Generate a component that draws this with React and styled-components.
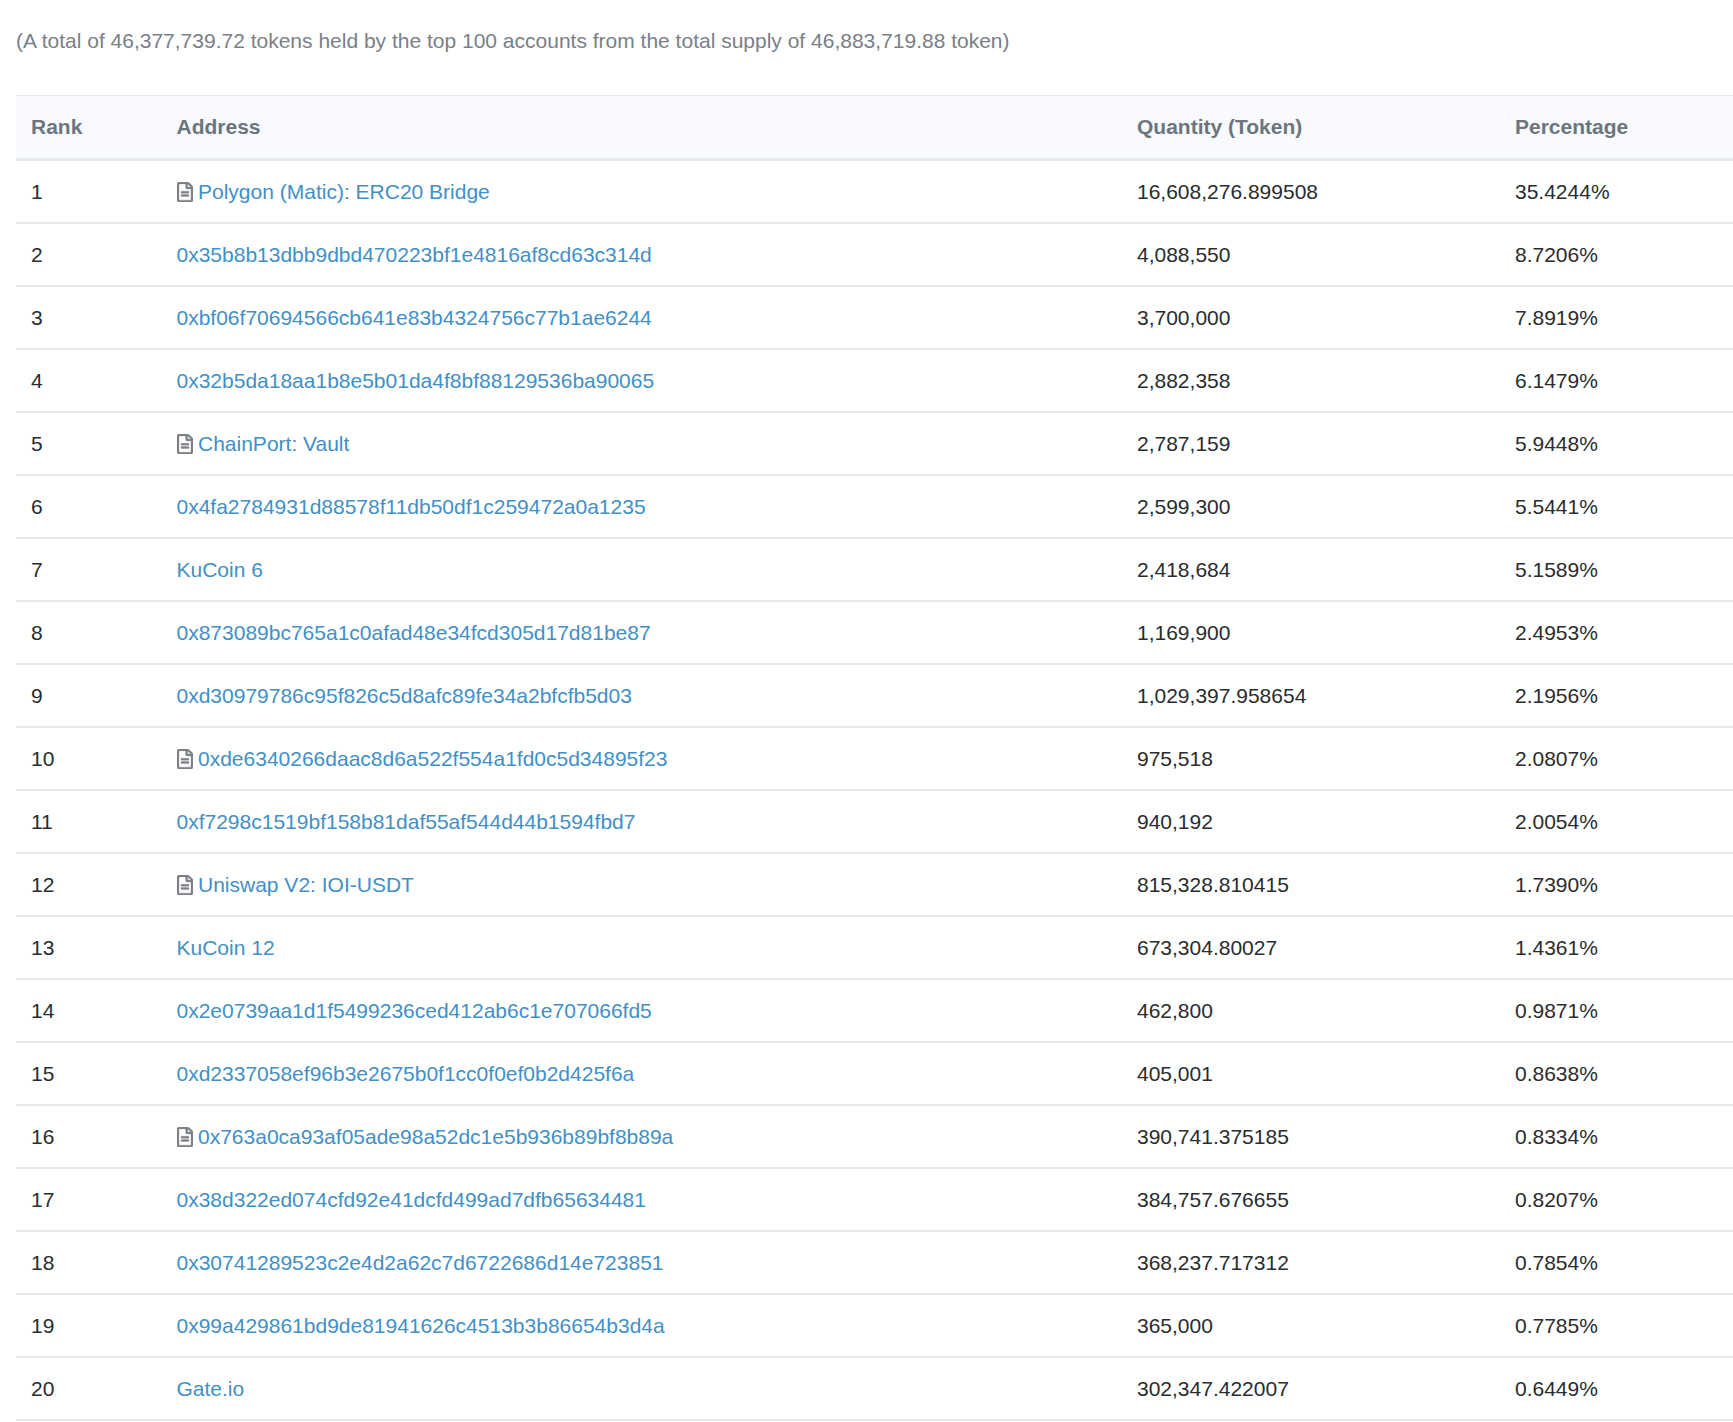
import React from 'react';
import styled, { createGlobalStyle } from 'styled-components';
import { FaRegFileAlt } from 'react-icons/fa';

const holders = [
  { address: 'Polygon (Matic): ERC20 Bridge', contract: true, quantity: '16,608,276.899508', percentage: '35.4244%' },
  { address: '0x35b8b13dbb9dbd470223bf1e4816af8cd63c314d', quantity: '4,088,550', percentage: '8.7206%' },
  { address: '0xbf06f70694566cb641e83b4324756c77b1ae6244', quantity: '3,700,000', percentage: '7.8919%' },
  { address: '0x32b5da18aa1b8e5b01da4f8bf88129536ba90065', quantity: '2,882,358', percentage: '6.1479%' },
  { address: 'ChainPort: Vault', contract: true, quantity: '2,787,159', percentage: '5.9448%' },
  { address: '0x4fa2784931d88578f11db50df1c259472a0a1235', quantity: '2,599,300', percentage: '5.5441%' },
  { address: 'KuCoin 6', quantity: '2,418,684', percentage: '5.1589%' },
  { address: '0x873089bc765a1c0afad48e34fcd305d17d81be87', quantity: '1,169,900', percentage: '2.4953%' },
  { address: '0xd30979786c95f826c5d8afc89fe34a2bfcfb5d03', quantity: '1,029,397.958654', percentage: '2.1956%' },
  { address: '0xde6340266daac8d6a522f554a1fd0c5d34895f23', contract: true, quantity: '975,518', percentage: '2.0807%' },
  { address: '0xf7298c1519bf158b81daf55af544d44b1594fbd7', quantity: '940,192', percentage: '2.0054%' },
  { address: 'Uniswap V2: IOI-USDT', contract: true, quantity: '815,328.810415', percentage: '1.7390%' },
  { address: 'KuCoin 12', quantity: '673,304.80027', percentage: '1.4361%' },
  { address: '0x2e0739aa1d1f5499236ced412ab6c1e707066fd5', quantity: '462,800', percentage: '0.9871%' },
  { address: '0xd2337058ef96b3e2675b0f1cc0f0ef0b2d425f6a', quantity: '405,001', percentage: '0.8638%' },
  { address: '0x763a0ca93af05ade98a52dc1e5b936b89bf8b89a', contract: true, quantity: '390,741.375185', percentage: '0.8334%' },
  { address: '0x38d322ed074cfd92e41dcfd499ad7dfb65634481', quantity: '384,757.676655', percentage: '0.8207%' },
  { address: '0x30741289523c2e4d2a62c7d6722686d14e723851', quantity: '368,237.717312', percentage: '0.7854%' },
  { address: '0x99a429861bd9de81941626c4513b3b86654b3d4a', quantity: '365,000', percentage: '0.7785%' },
  { address: 'Gate.io', quantity: '302,347.422007', percentage: '0.6449%' },
];

const GlobalStyle = createGlobalStyle`
  body {
    margin: 0;
    background: #fff;
    font-family: "Liberation Sans", Arial, sans-serif;
  }
`;

const Page = styled.div`
  padding: 28px 0 0 16px;
  overflow: hidden;
`;

const Summary = styled.p`
  margin: 0 0 42px;
  font-size: 21px;
  line-height: 25px;
  color: #7a8087;
`;

const Table = styled.table`
  width: 1717px;
  table-layout: fixed;
  border-collapse: collapse;
  font-size: 21px;
  color: #2a2c2e;
`;

const HeadRow = styled.tr`
  height: 64px;
  background: #f8fafd;
  border-top: 1px solid #e6e9ec;
  border-bottom: 3px solid #e6e9ec;
`;

const HeadCell = styled.th`
  box-sizing: border-box;
  padding: 0 15px 1px;
  width: ${(p) => p.$width}px;
  text-align: left;
  font-weight: 700;
  color: #6c757d;
`;

const Row = styled.tr`
  height: 63px;
  border-bottom: 2px solid #e6e9ec;
`;

const Cell = styled.td`
  padding: 2px 15px 0;
`;

const ContractIcon = styled(FaRegFileAlt)`
  width: 16px;
  height: 20px;
  margin-right: 5.5px;
  color: #7d8185;
  vertical-align: -3px;
  stroke: currentColor;
  stroke-width: 8px;
`;

const AddressLink = styled.a`
  color: #4290c5;
  text-decoration: none;
`;

export default function App() {
  return (
    <Page>
      <GlobalStyle />
      <Summary>
        (A total of 46,377,739.72 tokens held by the top 100 accounts from the total supply of 46,883,719.88 token)
      </Summary>
      <Table>
        <thead>
          <HeadRow>
            <HeadCell $width={145.5}>Rank</HeadCell>
            <HeadCell $width={960.5}>Address</HeadCell>
            <HeadCell $width={378}>Quantity (Token)</HeadCell>
            <HeadCell $width={233}>Percentage</HeadCell>
          </HeadRow>
        </thead>
        <tbody>
          {holders.map((h, i) => (
            <Row key={h.address}>
              <Cell>{i + 1}</Cell>
              <Cell>
                {h.contract && <ContractIcon preserveAspectRatio="none" />}
                <AddressLink href="#">{h.address}</AddressLink>
              </Cell>
              <Cell>{h.quantity}</Cell>
              <Cell>{h.percentage}</Cell>
            </Row>
          ))}
        </tbody>
      </Table>
    </Page>
  );
}
